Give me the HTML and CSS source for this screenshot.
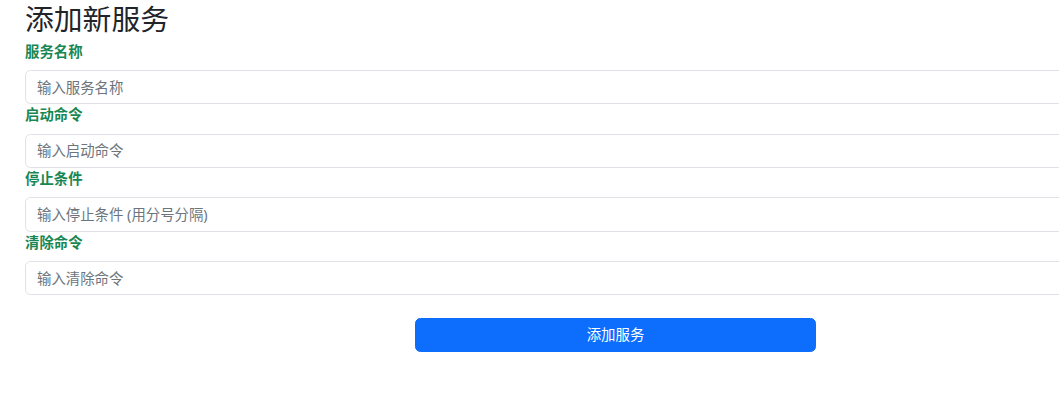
FILE: index.html
```html
<!DOCTYPE html>
<html lang="zh-CN">

<head>
    <meta charset="UTF-8">
    <meta name="viewport" content="width=device-width, initial-scale=1.0">
    <title>添加新服务</title>
    <link rel="stylesheet" href="styles.css">
</head>

<body>
    <div class="wrap">
        <h2 class="title">添加新服务</h2>
        <form class="form">
            <label class="lbl" for="name">服务名称</label>
            <input type="text" class="ipt" id="name" placeholder="输入服务名称">

            <label class="lbl" for="start">启动命令</label>
            <input type="text" class="ipt" id="start" placeholder="输入启动命令">

            <label class="lbl" for="stop">停止条件</label>
            <input type="text" class="ipt" id="stop" placeholder="输入停止条件 (用分号分隔)">

            <label class="lbl" for="clean">清除命令</label>
            <input type="text" class="ipt" id="clean" placeholder="输入清除命令">

            <div class="btn-row">
                <button type="button" class="btn">添加服务</button>
            </div>
        </form>
    </div>
</body>

</html>
```

FILE: styles.css
```css
* {
    margin: 0;
    padding: 0;
    box-sizing: border-box;
}

html,
body {
    overflow: hidden;
}

body {
    background: #fff;
    color: #212529;
    font-family: "Segoe UI", "Noto Sans", "Noto Sans CJK SC", sans-serif;
    font-size: 14.4px;
    line-height: 1.5;
}

.wrap {
    width: 1181px;
    margin-left: 25px;
}

.title {
    font-size: 28.8px;
    font-weight: 400;
    line-height: 1.2;
    margin-top: 2px;
    margin-bottom: 4px;
}

.form {
    display: flex;
    flex-direction: column;
}

.lbl {
    display: block;
    color: #198754;
    font-weight: 700;
    line-height: 22.3px;
    margin-bottom: 7.2px;
}

.ipt {
    display: block;
    width: 100%;
    height: 34.2px;
    padding: 5px 11px;
    font: inherit;
    color: #212529;
    border: 1px solid #dee2e6;
    border-radius: 5.4px;
    outline: none;
}

.ipt::placeholder {
    color: #6c757d;
}

.btn-row {
    display: flex;
    justify-content: center;
    margin-top: 22.5px;
}

.btn {
    width: 401px;
    height: 34.2px;
    font: inherit;
    color: #fff;
    background: #0d6efd;
    border: 1px solid #0d6efd;
    border-radius: 5.4px;
}
```
